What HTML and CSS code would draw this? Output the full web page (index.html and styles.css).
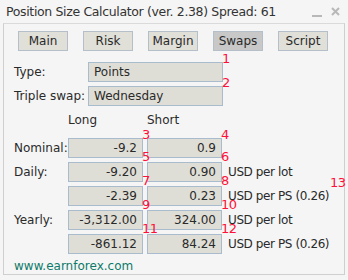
FILE: index.html
```html
<!DOCTYPE html>
<html lang="en">
<head>
  <meta charset="UTF-8">
  <title>Position Size Calculator</title>
  <link rel="stylesheet" href="styles.css">
</head>
<body>
  <div class="window">
    <div class="titlebar">
      <span class="title">Position Size Calculator (ver. 2.38) Spread: 61</span>
      <span class="controls">
        <span class="min"></span>
        <svg class="close" width="9" height="9" viewBox="0 0 9 9">
          <path d="M1 1 L8 8 M8 1 L1 8" stroke="#b8b8b8" stroke-width="2"/>
        </svg>
      </span>
    </div>

    <div class="panel">
      <div class="tabs">
        <div class="tab">Main</div>
        <div class="tab">Risk</div>
        <div class="tab">Margin</div>
        <div class="tab active">Swaps</div>
        <div class="tab">Script</div>
      </div>

      <div class="field">
        <span class="label">Type:</span>
        <div class="box wide">Points<span class="mark a">1</span></div>
      </div>
      <div class="field">
        <span class="label">Triple swap:</span>
        <div class="box wide">Wednesday<span class="mark a">2</span></div>
      </div>

      <div class="grid">
        <span></span>
        <span class="head">Long</span>
        <span class="head">Short</span>
        <span></span>

        <span class="label">Nominal:</span>
        <div class="box num">-9.2<span class="mark a">3</span><span class="mark b">5</span></div>
        <div class="box num">0.9<span class="mark a">4</span><span class="mark b">6</span></div>
        <span></span>

        <span class="label">Daily:</span>
        <div class="box num">-9.20<span class="mark b">7</span></div>
        <div class="box num">0.90<span class="mark b">8</span></div>
        <span class="unit">USD per lot</span>

        <span></span>
        <div class="box num">-2.39<span class="mark b">9</span></div>
        <div class="box num">0.23<span class="mark b">10</span></div>
        <span class="unit">USD per PS (0.26)</span>

        <span class="label">Yearly:</span>
        <div class="box num">-3,312.00<span class="mark b">11</span></div>
        <div class="box num">324.00<span class="mark b">12</span></div>
        <span class="unit">USD per lot</span>

        <span></span>
        <div class="box num">-861.12</div>
        <div class="box num">84.24</div>
        <span class="unit">USD per PS (0.26)</span>
      </div>

      <span class="mark m13">13</span>

      <div class="link">www.earnforex.com</div>
    </div>
  </div>
</body>
</html>
```

FILE: styles.css
```css
body {
  margin: 0;
  padding: 0;
  background: #f5f5f5;
  font-family: 'DejaVu Sans', sans-serif;
  font-size: 12px;
  color: #2a2a2a;
}

.window {
  width: 348px;
  height: 280px;
  position: relative;
}

.titlebar {
  height: 23px;
  display: flex;
  align-items: center;
  justify-content: space-between;
  padding: 0 8px 0 6px;
  box-sizing: border-box;
  font-size: 12.5px;
  letter-spacing: -0.35px;
  color: #333;
}

.controls {
  display: flex;
  align-items: center;
  gap: 9px;
}

.min {
  width: 10px;
  height: 2px;
  background: #b8b8b8;
  margin-top: 8px;
}

.panel {
  position: relative;
  margin: 0 3px;
  height: 252px;
  border: 1px solid #cfcfcf;
  border-top-color: #dadada;
  box-sizing: border-box;
  padding: 7px 0 0 10px;
}

.tabs {
  display: flex;
  gap: 15px;
  padding-left: 4px;
  margin-bottom: 11px;
}

.tab {
  width: 50px;
  height: 20px;
  box-sizing: border-box;
  border: 1px solid #b4bfca;
  background: #e0dfd8;
  text-align: center;
  line-height: 18px;
}

.tab.active {
  background: #c8c8c8;
}

.field {
  display: flex;
  align-items: center;
  margin-bottom: 4px;
}

.field .label {
  width: 74px;
}

.box {
  position: relative;
  height: 20px;
  box-sizing: border-box;
  border: 1px solid #a9bccd;
  background: #dfded6;
  line-height: 18px;
  padding: 0 5px;
}

.box.wide {
  width: 135px;
}

.grid {
  display: grid;
  grid-template-columns: 50px 75px 75px auto;
  column-gap: 4px;
  row-gap: 4px;
  align-items: center;
}

.grid .head {
  height: 24px;
  line-height: 20px;
}

.box.num {
  text-align: right;
}

.unit {
  margin-left: 2px;
  white-space: nowrap;
  letter-spacing: -0.4px;
}

.mark {
  position: absolute;
  z-index: 2;
  color: #ff1038;
  font-size: 13px;
  line-height: 10px;
  letter-spacing: -0.5px;
}

.mark.a {
  left: 100%;
  top: -9px;
}

.mark.b {
  left: 100%;
  bottom: -5px;
}

.m13 {
  left: 326px;
  top: 154px;
}

.link {
  margin-top: 5px;
  color: #0d7a6a;
}
```
